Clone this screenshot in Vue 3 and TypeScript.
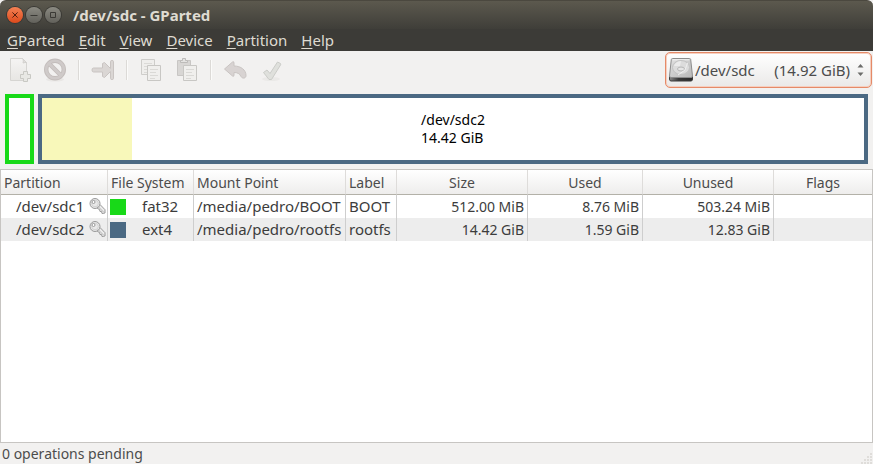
<script setup lang="ts">
import { ref } from 'vue'

interface Partition {
  name: string
  fs: string
  color: string
  mount: string
  label: string
  size: string
  used: string
  unused: string
  flags: string
}

const menus = ['GParted', 'Edit', 'View', 'Device', 'Partition', 'Help']

const partitions: Partition[] = [
  { name: '/dev/sdc1', fs: 'fat32', color: '#18d918', mount: '/media/pedro/BOOT', label: 'BOOT', size: '512.00 MiB', used: '8.76 MiB', unused: '503.24 MiB', flags: '' },
  { name: '/dev/sdc2', fs: 'ext4', color: '#4b6983', mount: '/media/pedro/rootfs', label: 'rootfs', size: '14.42 GiB', used: '1.59 GiB', unused: '12.83 GiB', flags: '' },
]

const usedPercent = 11
const device = ref('/dev/sdc')
</script>

<template>
  <div class="window">
    <header class="titlebar">
      <button class="wm close" aria-label="Close">
        <svg viewBox="0 0 16 16"><path d="M5.4 5.4l5.2 5.2M10.6 5.4l-5.2 5.2" /></svg>
      </button>
      <button class="wm" aria-label="Minimize">
        <svg viewBox="0 0 16 16"><path d="M4.500 8.500h7" /></svg>
      </button>
      <button class="wm" aria-label="Maximize">
        <svg viewBox="0 0 16 16"><path d="M5.500 5.500h5v5h-5z" /></svg>
      </button>
      <h1>/dev/sdc - GParted</h1>
    </header>

    <nav class="menubar">
      <button v-for="m in menus" :key="m"><u>{{ m[0] }}</u>{{ m.slice(1) }}</button>
    </nav>

    <div class="toolbar">
      <svg width="0" height="0" class="defs" aria-hidden="true">
        <defs>
          <linearGradient id="paper" x1="0" y1="0" x2="0" y2="1">
            <stop offset="0" stop-color="#f5f4f3" /><stop offset="1" stop-color="#e7e6e3" />
          </linearGradient>
          <linearGradient id="metal" x1="0" y1="0" x2="1" y2="1">
            <stop offset="0" stop-color="#e2e2e2" /><stop offset="1" stop-color="#b8b8b8" />
          </linearGradient>
          <linearGradient id="front" x1="0" y1="0" x2="1" y2="0">
            <stop offset="0" stop-color="#8a8a8a" /><stop offset=".4" stop-color="#3a3a3a" /><stop offset="1" stop-color="#2a2a2a" />
          </linearGradient>
        </defs>
      </svg>
      <button class="tool" aria-label="New" disabled>
        <svg viewBox="0 0 24 24">
          <path d="M3.500 .5h12l4 4v18h-16z" fill="url(#paper)" stroke="#d6d5d2" />
          <path d="M15.500 .5c1 1.500 1 3 .5 4.500 1.500-.6 2.500-.5 3.500-.5z" fill="#e0dfdc" stroke="#d3d1ce" />
          <path d="M16.500 13.500h4v3h3v4h-3v3h-4v-3h-3v-4h3z" fill="#e8e8e4" stroke="#c8c8c3" />
        </svg>
      </button>
      <button class="tool" aria-label="Delete" disabled>
        <svg viewBox="0 0 24 24">
          <ellipse cx="12" cy="21.500" rx="9" ry="2" fill="#e9e7e5" />
          <circle cx="12" cy="11.500" r="8.800" fill="none" stroke="#c3bdbb" stroke-width="4.400" />
          <path d="M6.500 6l11 11" stroke="#c3bdbb" stroke-width="4.400" />
          <circle cx="12" cy="11.500" r="8.800" fill="none" stroke="#cfcac9" stroke-width="2.600" />
          <path d="M6 5.500l12 12" stroke="#cfcac9" stroke-width="2.600" />
        </svg>
      </button>
      <span class="sep"></span>
      <button class="tool" aria-label="Resize/Move" disabled>
        <svg viewBox="0 0 24 24">
          <path d="M2.500 10h9V5.500l2-1 6 6V3.500q0-1 1.500-1t1.500 1v17q0 1-1.500 1t-1.500-1v-7l-6 6-2-1V14h-9q-1.500 0-1.500-2t1.500-2z" fill="#dad6d4" stroke="#c9c4c2" stroke-linejoin="round" />
        </svg>
      </button>
      <span class="sep"></span>
      <button class="tool" aria-label="Copy" disabled>
        <svg viewBox="0 0 24 24">
          <path d="M2.500 1.500h13v15h-13z" fill="#efeeec" stroke="#cecdca" />
          <path d="M5 5.500h8M5 8.500h6M5 11.500h7M5 14.500h4" stroke="#dbdad7" />
          <path d="M8.500 7.500h13v15h-13z" fill="#f0efed" stroke="#c8c7c4" />
          <path d="M11 11.500h8M11 14.500h6M11 17.500h8M11 20.500h5" stroke="#dad9d6" />
        </svg>
      </button>
      <button class="tool" aria-label="Paste" disabled>
        <svg viewBox="0 0 24 24">
          <path d="M2.500 2.500h13v15h-13z" fill="#d8d6d4" stroke="#c8c6c4" />
          <path d="M5.500 4.500v-2h2v-2h3v2h2v2z" fill="#e4e3e1" stroke="#bdbbb9" />
          <path d="M8.500 7.500h13v15h-13z" fill="#f0efed" stroke="#c8c7c4" />
          <path d="M11 11.500h8M11 14.500h6M11 17.500h8M11 20.500h5" stroke="#dad9d6" />
        </svg>
      </button>
      <span class="sep"></span>
      <button class="tool" aria-label="Undo" disabled>
        <svg viewBox="0 0 24 24">
          <path d="M1.500 11L9.500 4q1.500-1 1.500 1v3c7 0 12 4 12 9.500 0 3-3.500 3.500-5 1-1.500-3-3.500-4-7-4V17q0 2-1.500 1z" fill="#d8d3d2" stroke="#c9c4c2" stroke-linejoin="round" />
        </svg>
      </button>
      <button class="tool" aria-label="Apply" disabled>
        <svg viewBox="0 0 24 24">
          <ellipse cx="12" cy="21" rx="9" ry="2" fill="#eae9e7" />
          <path d="M4.500 14.500l3.500-2.500 3 3.500L18.500 4l3 1.500q.5.500 0 1.500L12.500 21.500H10z" fill="#dfe0dc" stroke="#cbccc8" stroke-linejoin="round" />
        </svg>
      </button>

      <label class="device">
        <svg class="disk" viewBox="0 0 24 24" aria-hidden="true">
          <path d="M.5 18.500h23V21q0 2-1.500 2H2Q.5 23 .5 21z" fill="url(#front)" stroke="#3a3a3a" />
          <path d="M3.500.5h17q1 0 1.200 1L23.500 18q0 1.500-1.500 1.500H2Q.5 19.500.5 18L2.300 1.500q.2-1 1.200-1z" fill="url(#metal)" stroke="#8c8c8c" />
          <path d="M3.800 1.800h16.400" stroke="#f6f6f6" />
          <ellipse cx="12" cy="9.500" rx="8.500" ry="7" fill="#dcdcdc" stroke="#c2c2c2" />
          <path d="M5 8q1.500-4.500 7-5l-1 5z" fill="#ebebeb" />
          <ellipse cx="12" cy="11" rx="3.500" ry="2" fill="#e6e6e6" stroke="#b5b5b5" />
          <path d="M18.500 5l-2.500 7-7 5" fill="none" stroke="#efefef" />
        </svg>
        <select v-model="device" aria-label="Device">
          <option value="/dev/sdc">/dev/sdc&nbsp;&nbsp;&nbsp;&nbsp;&nbsp;(14.92 GiB)</option>
        </select>
        <svg class="arrows" viewBox="0 0 7 12" aria-hidden="true">
          <path d="M.5 3.500L3.500 0l3 3.500zM.5 8.500L3.500 12l3-3.500z" fill="#6c6c6a" />
        </svg>
      </label>
    </div>

    <section class="visual">
      <div class="part boot"></div>
      <div class="part root">
        <div class="used" :style="{ width: usedPercent + '%' }"></div>
        <div class="caption">
          <span>/dev/sdc2</span>
          <span>14.42 GiB</span>
        </div>
      </div>
    </section>

    <main class="list">
      <table>
        <colgroup>
          <col class="c-part" /><col class="c-fs" /><col class="c-mount" /><col class="c-label" />
          <col class="c-size" /><col class="c-used" /><col class="c-unused" /><col />
        </colgroup>
        <thead>
          <tr>
            <th>Partition</th><th>File System</th><th>Mount Point</th><th>Label</th>
            <th class="mid">Size</th><th class="mid">Used</th><th class="mid">Unused</th><th class="mid">Flags</th>
          </tr>
        </thead>
        <tbody>
          <tr v-for="p in partitions" :key="p.name">
            <td>
              <div class="name">
                {{ p.name }}
                <svg viewBox="0 0 17 17" aria-label="Mounted">
                  <path d="M8.500 8l2.500-1.500 5 5.200V15l-3 .5-.5-2h-1.500l-.5-2-2-1z" fill="#ececec" stroke="#999" stroke-linejoin="round" />
                  <circle cx="6" cy="5.500" r="5" fill="#e8e8e8" stroke="#999" />
                  <circle cx="6" cy="5.500" r="3.300" fill="none" stroke="#d2d2d2" />
                  <circle cx="4.500" cy="4" r="1.500" fill="#fff" stroke="#999" />
                  <path d="M9 8.500l5.500 5.500" stroke="#b5b5b5" />
                </svg>
              </div>
            </td>
            <td><div class="fs"><i :style="{ background: p.color }"></i>{{ p.fs }}</div></td>
            <td>{{ p.mount }}</td>
            <td>{{ p.label }}</td>
            <td class="num">{{ p.size }}</td>
            <td class="num">{{ p.used }}</td>
            <td class="num">{{ p.unused }}</td>
            <td>{{ p.flags }}</td>
          </tr>
        </tbody>
      </table>
    </main>

    <footer class="status">
      <span>0 operations pending</span>
      <svg class="grip" viewBox="0 0 12 12" aria-hidden="true">
        <path d="M10 1h2v2h-2zM7 4h2v2H7zM10 4h2v2h-2zM4 7h2v2H4zM7 7h2v2H7zM10 7h2v2h-2zM1 10h2v2H1zM4 10h2v2H4zM7 10h2v2H7zM10 10h2v2h-2z" fill="#dfddda" />
      </svg>
    </footer>
  </div>
</template>

<style>
body {
  margin: 0;
  background: #f2f1f0;
}
</style>

<style scoped>
.window {
  display: flex;
  flex-direction: column;
  min-height: 100vh;
  background: #f2f1f0;
  color: #3c3c3c;
  font: 15px/17px "Noto Sans", "Open Sans", sans-serif;
}
button {
  border: 0;
  padding: 0;
  background: none;
  color: inherit;
  font: inherit;
}
svg {
  display: block;
}
.defs {
  position: absolute;
}
.titlebar {
  display: flex;
  align-items: center;
  gap: 3px;
  height: 28px;
  padding: 0 7px;
  border-top: 1px solid #4b483f;
  border-radius: 6px 6px 0 0;
  background: linear-gradient(#5c594e, #3f3e39);
}
.wm {
  width: 16px;
  height: 16px;
  border-radius: 50%;
  background: linear-gradient(#8b8a82, #62615b);
  box-shadow: 0 0 0 1px #3a3935;
}
.wm svg {
  width: 16px;
  height: 16px;
  fill: none;
  stroke: #3a3935;
}
.close {
  background: linear-gradient(#f58154, #dd4a1c);
}
.close svg {
  stroke: #54200f;
}
h1 {
  margin: 0 0 0 9px;
  color: #dfdbd2;
  font-size: 15px;
  line-height: 20px;
}
.menubar {
  display: flex;
  gap: 14px;
  height: 22px;
  padding: 0 7px;
  background: #3c3b37;
  color: #dfdbd2;
}
u {
  text-underline-offset: 2px;
  text-decoration-thickness: 1px;
  text-decoration-skip-ink: none;
}
.toolbar {
  display: flex;
  align-items: center;
  gap: 12px;
  height: 38px;
  padding: 0 1px 0 7px;
  background: #f2f1f0;
}
.tool svg {
  width: 24px;
  height: 24px;
}
.sep {
  width: 1px;
  height: 20px;
  margin: 0 -1px;
  border-right: 1px solid #fbfbfa;
  background: #dcdad7;
}
.device {
  display: flex;
  align-items: center;
  box-sizing: border-box;
  width: 207px;
  height: 36px;
  margin-left: auto;
  padding: 0 7px 0 3px;
  border: 1px solid #e58a68;
  border-radius: 5px;
  background: linear-gradient(#fff, #eae9e8);
  box-shadow: inset 0 0 0 1px #f6cfbf;
}
.disk {
  width: 24px;
  height: 24px;
  flex: none;
}
.device select {
  flex: 1;
  min-width: 0;
  margin: 0 0 0 2px;
  padding: 0;
  border: 0;
  outline: 0;
  appearance: none;
  background: none;
  color: #4c4c4c;
  font: inherit;
  line-height: 21px;
}
.arrows {
  width: 7px;
  height: 12px;
  flex: none;
}
.visual {
  display: flex;
  gap: 4px;
  padding: 5px;
}
.part {
  display: flex;
  box-sizing: border-box;
  height: 70px;
  border: 4px solid #4b6983;
  background: #fff;
}
.boot {
  width: 29px;
  border-color: #18d918;
}
.root {
  position: relative;
  flex: 1;
  align-items: center;
  justify-content: center;
}
.used {
  position: absolute;
  inset: 0 auto 0 0;
  background: #f8f8ba;
}
.caption {
  display: grid;
  color: #000;
  font-size: 14px;
  line-height: 18px;
}
.list {
  flex: 1;
  border: 1px solid #c7c5c2;
  background: #fff;
}
table {
  width: 100%;
  table-layout: fixed;
  border-collapse: separate;
  border-spacing: 0;
}
.c-part { width: 107px; }
.c-fs { width: 86px; }
.c-mount { width: 152px; }
.c-label { width: 51px; }
.c-size { width: 131px; }
.c-used { width: 115px; }
.c-unused { width: 131px; }
th,
td {
  height: 23px;
  padding: 0 3px;
  border-right: 1px solid #cecece;
  box-sizing: border-box;
  text-align: left;
  white-space: nowrap;
}
th {
  height: 25px;
  border-right-color: #dedcda;
  border-bottom: 1px solid #b3b1a8;
  background: linear-gradient(#fff, #eeedec);
  color: #4c4c4c;
  font-size: 14px;
  font-weight: 400;
}
th:last-child,
td:last-child {
  border-right: 0;
}
tbody tr:nth-child(even) {
  background: #ededed;
}
.mid {
  text-align: center;
}
.num {
  font-size: 14px;
  text-align: right;
}
.name {
  display: flex;
  align-items: center;
  justify-content: space-between;
  margin: 0 -2px 0 12px;
}
.name svg {
  width: 17px;
  height: 17px;
}
.fs {
  display: flex;
  align-items: center;
  gap: 16px;
}
.fs i {
  width: 16px;
  height: 16px;
  margin-left: -1px;
}
.status {
  display: flex;
  align-items: center;
  justify-content: space-between;
  height: 21px;
  padding: 0 1px 0 2px;
  color: #4c4c4c;
  font-size: 14px;
}
.grip {
  align-self: flex-end;
  width: 12px;
  height: 12px;
}
</style>
